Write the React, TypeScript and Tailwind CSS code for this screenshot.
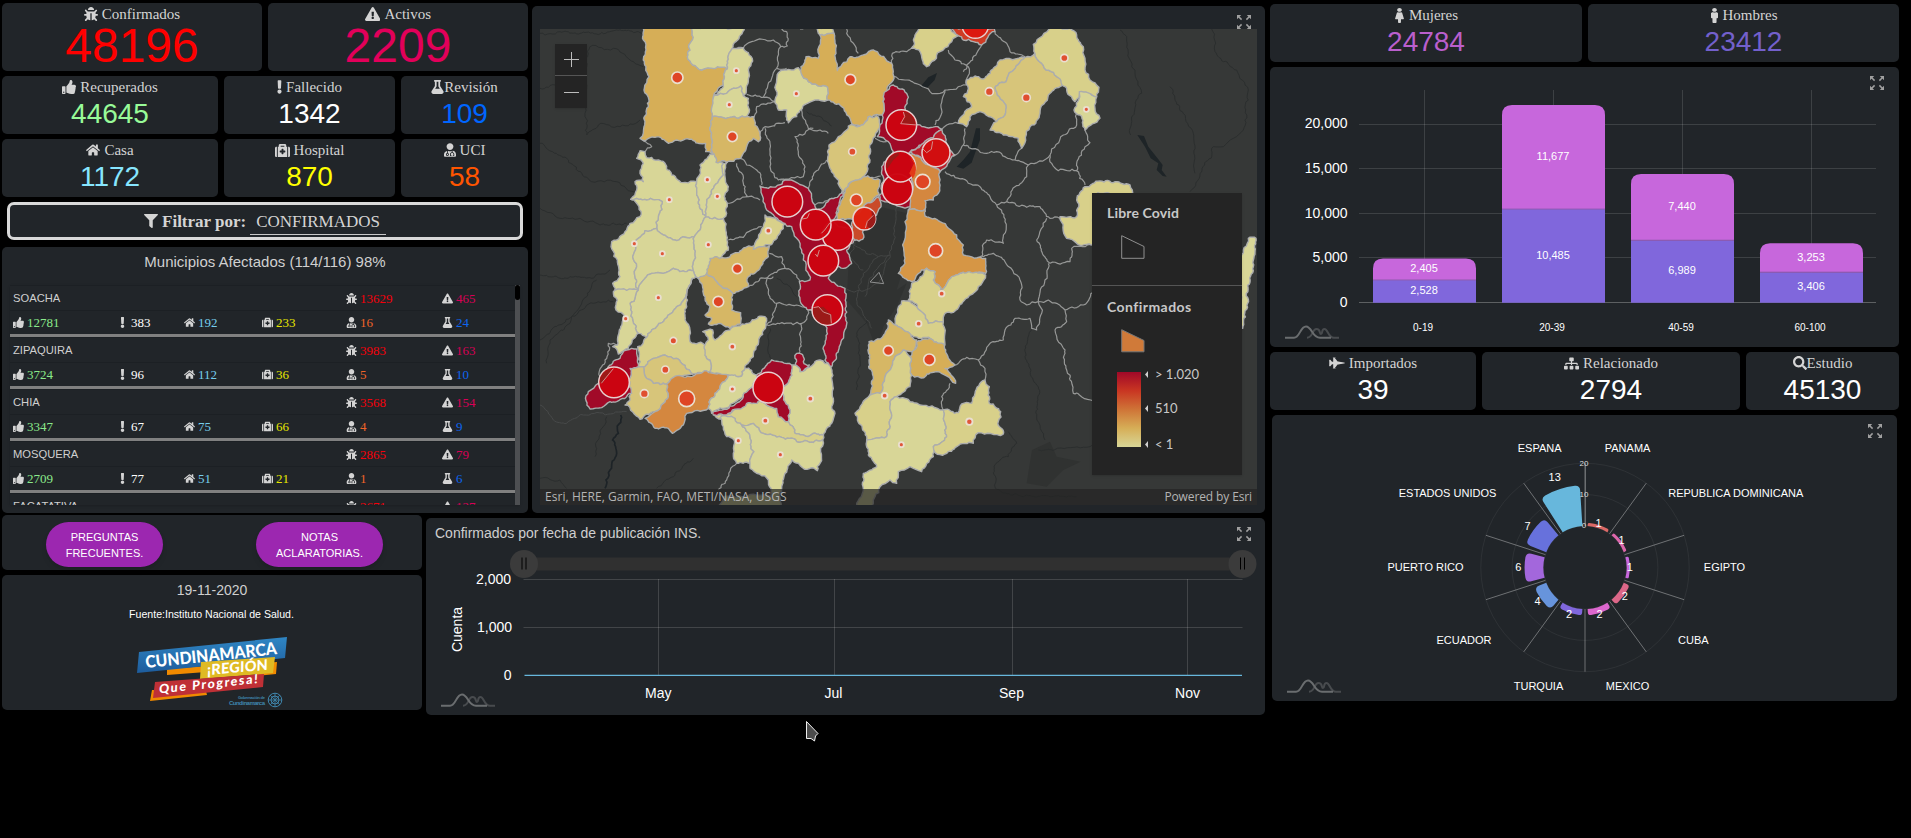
import type { ReactNode } from "react";
import type { IconType } from "react-icons";
import {
  FaBug,
  FaExclamationTriangle,
  FaThumbsUp,
  FaExclamation,
  FaFlask,
  FaHome,
  FaMedkit,
  FaUserMd,
  FaFilter,
  FaFemale,
  FaMale,
  FaFighterJet,
  FaSitemap,
  FaSearch,
} from "react-icons/fa";

const SANS = "font-['Liberation_Sans',sans-serif]";
const SERIF = "font-['Liberation_Serif',serif]";

/* ---------- shared pieces ---------- */

function Stat({
  icon: Icon,
  label,
  value,
  className,
  color,
  tight,
  big,
  iconClass = "size-[14px]",
}: {
  icon: IconType;
  label: string;
  value: string;
  className: string;
  color: string;
  tight?: boolean;
  big?: boolean;
  iconClass?: string;
}) {
  return (
    <div className={`flex flex-col items-center rounded-[5px] bg-[#212529] ${big ? "h-[68px]" : "h-[58px]"} ${className}`}>
      <div className={`flex h-[22px] items-center text-[15px] leading-none text-[#d4d4d4] ${SERIF} ${tight ? "gap-0" : "gap-1"}`}>
        <Icon className={iconClass} />
        <span>{label}</span>
      </div>
      <div className={`${SANS} ${color} ${big ? "text-[48px] leading-[41px]" : "text-[28px] leading-[31px]"}`}>{value}</div>
    </div>
  );
}

function ExpandIcon() {
  return (
    <svg width="14" height="14" viewBox="0 0 14 14" className="block" fill="#a0a0a0" stroke="#a0a0a0">
      <g strokeWidth="1.5">
        <path d="M1.5 1.5L4.6 4.6M12.5 1.5L9.4 4.6M1.5 12.5L4.6 9.4M12.5 12.5L9.4 9.4" />
      </g>
      <path stroke="none" d="M0 0h4.2L0 4.2zM14 0v4.2L9.8 0zM0 14V9.8L4.2 14zM14 14H9.8L14 9.8z" />
    </svg>
  );
}

function CurvesLogo({ x, y }: { x: number; y: number }) {
  return (
    <g transform={`translate(${x} ${y})`} fill="none" strokeWidth="2">
      <path stroke="#484b4e" d="M22 12.3C28 12.3 27 3.5 31.5 3.5S34 8.5 36 8.5S36 3.5 39.5 3.5S43 12.3 49 12.3H54" />
      <path stroke="#6a6d6f" d="M0 12.3H9C15 12.3 15 1 21 1S27 12.3 35 12.3H46" />
    </g>
  );
}

/* ---------- map ---------- */

type Pt = [number, number];

function parse(s: string, dx = 0, dy = 0): Pt[] {
  return s
    .trim()
    .split(/\s+/)
    .map((p) => {
      const [x, y] = p.split(",").map(Number);
      return [x + dx, y + dy] as Pt;
    });
}

function noise(a: number, b: number) {
  const v = Math.sin(a * 12.9898 + b * 78.233) * 43758.5453;
  return v - Math.floor(v) - 0.5;
}

/* Breaks a segment into small irregular steps; both directions give the same line. */
function subdivide(a: Pt, b: Pt): Pt[] {
  const flip = a[0] > b[0] || (a[0] === b[0] && a[1] > b[1]);
  const [p, q] = flip ? [b, a] : [a, b];
  const walk = (m: Pt, n: Pt): Pt[] => {
    const len = Math.hypot(n[0] - m[0], n[1] - m[1]);
    if (len < 10) return [n];
    const off = noise(m[0] + n[0], m[1] + n[1]) * Math.min(len * 0.42, 10);
    const c: Pt = [
      (m[0] + n[0]) / 2 - ((n[1] - m[1]) / len) * off,
      (m[1] + n[1]) / 2 + ((n[0] - m[0]) / len) * off,
    ];
    return [...walk(m, c), ...walk(c, n)];
  };
  const all = [p, ...walk(p, q)];
  if (flip) all.reverse();
  return all.slice(1);
}

function outline(pts: Pt[], closed: boolean) {
  const out: Pt[] = [pts[0]];
  const n = closed ? pts.length : pts.length - 1;
  for (let i = 0; i < n; i++) out.push(...subdivide(pts[i], pts[(i + 1) % pts.length]));
  return "M" + out.map((p) => `${p[0].toFixed(1)} ${p[1].toFixed(1)}`).join("L") + (closed ? "Z" : "");
}

const PALE = "#d8d697";
const SAND = "#d8d08a";
const WHEAT = "#d7c57a";
const GOLD = "#d6b765";
const AMBER = "#d6ae57";
const ORANGE = "#d4873f";
const CRIMSON = "#a10a28";

type Region = [string, string, number?, number?];

const regions: Region[] = [
  [AMBER, "340,80 487,80 480,130 472,170 488,195 515,210 592,207 580,255 553,280 547,350 550,462 527,455 527,430 490,422 440,420 415,430 375,412 345,423 330,415 342,380 357,300 343,265 357,230 343,190 348,150 340,120"],
  [PALE, "487,80 642,80 642,90 628,110 607,145 597,160 592,207 515,210 488,195 472,170 480,130"],
  [PALE, "607,145 640,143 655,158 668,183 655,210 655,245 640,288 632,258 618,265 590,280 553,285 580,255 592,207 597,160"],
  [PALE, "553,285 590,280 618,265 632,258 640,288 655,295 650,350 600,352 547,350"],
  [GOLD, "547,350 600,352 650,350 672,350 675,375 690,400 685,425 670,415 650,440 632,475 590,487 558,487 550,462"],
  [PALE, "345,455 350,473 405,490 425,525 465,547 500,545 500,570 505,610 528,650 500,700 493,710 440,722 400,705 380,685 385,650 397,605 350,600 302,598 320,570 315,545 340,545 330,520 340,490 320,475 330,452"],
  [PALE, "302,598 350,600 397,605 385,650 380,685 345,692 325,715 308,770 320,800 315,830 325,870 300,870 255,870 248,850 270,830 262,780 245,725 290,690 300,670 330,650 327,620"],
  [PALE, "325,715 345,692 380,685 400,705 440,722 493,710 495,760 490,812 470,815 430,805 400,820 365,820 345,835 325,870 315,830 320,800 308,770"],
  [PALE, "493,710 500,700 528,650 580,655 587,690 595,750 575,770 545,790 530,835 505,835 497,830 490,812 495,760"],
  [PALE, "510,495 540,462 553,462 558,487 580,490 580,525 545,570 530,610 528,650 505,610 500,570 500,545 510,510"],
  [PALE, "580,490 592,487 585,530 595,560 585,600 590,640 580,655 528,650 530,610 545,570 580,525"],
  [PALE, "345,85 365,70 400,70 430,55 470,65 490,62 497,80 487,85 470,130 440,170 380,230 350,262 325,250 308,210 300,160 325,120", 0, 750],
  [PALE, "255,120 325,120 300,160 308,210 325,250 300,285 265,312 248,290 262,285 268,240 285,200 258,180 262,150 250,125", 0, 750],
  [SAND, "487,85 470,130 465,210 480,240 480,275 530,285 530,325 540,330 540,365 500,370 488,372 455,340 440,325 405,315 370,325 340,350 325,350 323,290 350,262 380,230 440,170 470,130", 0, 750],
  [WHEAT, "340,350 370,325 405,315 440,325 455,340 488,372 440,385 418,395 410,402 370,400 350,385 342,360", 0, 750],
  [WHEAT, "300,355 325,350 340,350 342,360 350,385 370,400 410,402 415,440 400,460 375,485 330,508 285,465 300,450 298,410", 0, 750],
  [ORANGE, "418,395 430,382 480,380 530,362 595,375 570,410 540,450 535,475 470,490 460,525 427,550 415,535 375,535 345,505 375,485 400,460 415,440 410,402", 0, 750],
  [CRIMSON, "320,297 325,350 300,355 298,410 305,430 260,455 240,455 215,473 180,477 168,452 175,425 205,400 235,350 270,325 290,300", 0, 750],
  [GOLD, "540,25 560,20 600,20 635,0 665,-10 718,-12 715,20 690,55 655,80 655,110 630,122 608,130 590,115 555,90 530,70", 0, 750],
  [GOLD, "505,85 530,70 555,90 590,115 608,130 605,180 632,188 632,222 600,235 575,222 535,222 545,205 525,195 540,170 520,130", 0, 750],
  [SAND, "518,245 548,240 555,270 600,240 650,220 685,200 705,200 708,225 690,260 670,320 645,355 635,378 605,380 595,375 540,365 540,330 530,325 525,285 535,270", 0, 750],
  [PALE, "595,375 635,378 645,355 680,375 670,410 640,440 580,475 545,490 535,475 540,450 570,410", 0, 750],
  [PALE, "785,345 797,345 810,365 838,352 870,330 905,345 905,470 915,490 905,520 880,555 840,557 795,550 775,515 780,480 765,455 757,430 780,385", 0, 750],
  [SAND, "553,495 600,492 650,460 690,452 740,475 745,500 775,515 795,550 840,557 880,555 878,570 800,575 755,562 700,550 670,520 635,525 615,505 560,503", 0, 750],
  [PALE, "570,503 615,505 635,525 660,560 672,605 660,640 620,640 610,610 612,570 590,560 580,530", 0, 750],
  [PALE, "635,525 670,520 700,550 755,562 800,575 878,570 870,640 862,662 820,655 785,630 765,670 755,715 750,775 565,775 580,740 725,742 715,690 660,655 660,640 672,605 660,560", 0, 750],
  [CRIMSON, "710,345 725,330 785,345 780,385 757,430 765,455 780,480 775,515 745,500 740,475 690,452 650,460 595,490 550,495 550,485 600,468 640,440 670,410 680,375", 0, 750],
  [CRIMSON, "800,310 820,320 820,335 838,345 810,365 797,345 795,325", 0, 750],
  [PALE, "752,212 775,208 805,203 822,235 893,262 893,300 855,300 822,315 800,350 775,368 770,330 745,330 735,300 740,240"],
  [AMBER, "870,105 912,100 918,160 922,212 935,195 960,170 1000,165 1035,153 1085,190 1090,240 1060,290 1057,345 1015,350 990,378 965,370 935,320 893,300 893,262 822,235 812,212 828,170 865,175"],
  [SAND, "858,80 900,80 912,100 870,105"],
  [WHEAT, "990,378 1015,350 1038,347 1050,375 1035,410 1025,430 1020,480 1000,530 965,545 935,578 925,540 900,505 893,475 897,435 925,410 955,378"],
  [AMBER, "1000,530 1050,540 1048,585 1010,610 970,660 920,660 925,620 945,575 965,545"],
  [CRIMSON, "690,558 715,565 765,540 835,565 850,610 860,630 905,595 945,578 925,620 920,645 905,660 925,680 965,690 975,720 950,750 965,790 940,805 915,800 895,835 945,865 947,960 935,1020 905,1100 885,1080 890,990 880,945 835,930 810,900 808,845 840,840 820,780 815,750 800,715 785,680 760,670 710,630 700,595"],
  [SAND, "705,645 765,670 750,700 720,735 670,748 685,715 700,680"],
  ["#c94a2a", "970,660 1010,610 1045,590 1053,620 1030,650 1000,690 998,718 975,720 965,690"],
  [CRIMSON, "1090,255 1130,280 1130,375 1235,388 1180,430 1135,460 1145,510 1150,560 1140,620 1110,620 1050,600 1060,545 1055,500 1090,455 1075,425 1042,410 1050,375 1057,345 1060,290"],
  ["#b8202c", "1140,455 1180,430 1235,388 1250,430 1275,465 1230,515 1205,500 1175,480"],
  [ORANGE, "1135,460 1175,480 1205,500 1230,515 1225,580 1210,600 1185,602 1185,628 1135,630 1150,560 1145,510"],
  ["#d69645", "1135,630 1185,628 1185,648 1230,665 1280,705 1300,735 1300,765 1367,775 1367,820 1290,820 1265,830 1235,875 1210,840 1215,815 1190,805 1145,845 1105,820 1125,790 1125,665"],
  [SAND, "1165,80 1262,80 1262,87 1285,107 1230,155 1190,200 1170,155 1145,145 1155,105"],
  ["#cf3c25", "1262,80 1395,80 1395,95 1355,135 1330,125 1300,120 1285,107"],
  [WHEAT, "1310,240 1335,228 1355,237 1410,180 1485,172 1445,215 1430,240 1395,262 1408,290 1428,315 1425,345 1400,365 1350,335 1320,350 1310,380 1285,370 1325,320 1300,290 1315,265"],
  [WHEAT, "1485,172 1515,160 1535,190 1580,230 1620,245 1590,260 1555,285 1530,340 1500,380 1475,445 1465,415 1420,405 1380,390 1400,365 1425,345 1428,315 1408,290 1395,262 1430,240 1445,215"],
  [SAND, "1510,133 1560,80 1620,85 1640,105 1660,140 1665,210 1680,240 1707,262 1700,290 1650,275 1635,305 1610,265 1580,230 1535,190 1515,160"],
  [PALE, "1648,275 1700,290 1695,325 1710,355 1665,390 1650,345 1632,330"],
  [SAND, "1665,560 1710,543 1800,555 1804,585 1690,585 1690,735 1640,730 1610,715 1590,650 1640,650 1640,600"],
  [PALE, "2130,770 2155,715 2178,715 2170,800 2138,985"],
  [SAND, "110,55 135,65 130,90 155,125 185,80 210,70 287,75 250,130 190,187 165,190 160,215 115,220 100,190 75,160 55,150 65,100", 1080, 750],
  [SAND, "35,153 60,155 100,190 115,220 160,215 165,285 125,268 85,265 50,245 15,225", 1080, 750],
  [GOLD, "-5,210 15,225 50,245 80,270 75,305 40,300 15,320 5,350 -15,380 -30,430 -60,435 -50,380 -63,355 -63,275 -15,250", 1080, 750],
  [AMBER, "80,275 125,268 163,285 175,325 195,345 165,355 197,400 140,365 105,380 65,375 60,320", 1080, 750],
  [SAND, "-15,380 5,350 15,320 40,300 60,320 65,375 60,410 20,440 0,455 0,510 -10,560 -70,570 -105,490 -60,435 -30,430", 1080, 750],
  [PALE, "0,455 20,440 55,448 90,465 160,480 165,520 170,560 130,590 130,620 95,665 60,650 25,665 20,700 0,690 -30,710 -60,775 -105,775 -80,715 -80,670 -40,650 -65,615 -70,570 -10,560 0,510", 1080, 750],
  [SAND, "160,480 205,488 215,462 245,460 255,430 285,390 298,410 298,460 332,485 325,515 340,552 265,548 250,580 200,590 165,612 135,608 130,590 170,560 165,520", 1080, 750],
];

const borders: [string, number?, number?][] = [
  ["612,145 640,145 665,125 730,120 752,140 740,205 725,235 700,292 650,283"],
  ["752,140 772,138 770,95 755,87"],
  ["740,205 770,205"],
  ["700,292 735,305 680,320 672,350"],
  ["765,368 740,370 705,380 690,400"],
  ["705,385 720,430 720,500 745,540 765,540"],
  ["815,320 820,355 835,385 870,390 895,400"],
  ["850,385 795,410 805,455 825,500 820,530 750,540"],
  ["890,480 865,510 840,545 835,565"],
  ["950,87 950,100 985,160"],
  ["810,87 820,87"],
  ["630,475 650,495 680,510 695,555"],
  ["620,490 640,550 655,590 590,610"],
  ["655,590 690,600"],
  ["850,615 905,595"],
  ["595,720 640,712 665,690 695,680"],
  ["1035,415 1070,425"],
  ["1000,530 1052,528"],
  ["340,423 365,440 345,455"],
  ["1085,190 1087,160 1130,155 1150,140"],
  ["1090,228 1125,240 1170,255 1200,275 1230,280 1245,270 1310,255 1315,200 1275,180 1255,150"],
  ["1300,215 1310,195 1340,160 1355,135"],
  ["1395,95 1430,130 1440,155 1485,170"],
  ["1245,270 1235,330 1215,375"],
  ["1235,388 1250,375 1285,370"],
  ["1305,385 1300,435 1270,470"],
  ["1300,435 1370,460 1400,455 1455,480 1475,445"],
  ["1455,480 1495,495 1560,465 1600,405 1640,375 1640,340"],
  ["1560,465 1565,490 1585,512 1640,512 1640,490 1665,440 1680,428 1665,390"],
  ["1640,512 1665,555"],
  ["1495,495 1490,530 1455,560 1430,605"],
  ["1245,515 1350,560 1380,590 1400,615 1425,665 1420,730 1370,720 1355,770"],
  ["1400,615 1430,605 1490,622 1530,620 1560,655 1590,655"],
  ["1550,655 1520,720 1560,790 1620,785 1625,745 1690,735"],
  ["270,20 310,10 345,35 390,90 390,150 410,165 445,155 475,40", 1080, 750],
  ["445,155 475,150 525,180 530,215 495,240 525,310 530,360 550,430 620,455", 1080, 750],
  ["525,180 580,165 610,120", 1080, 750],
  ["445,155 455,190 440,240 425,235 420,205 375,205 345,240 340,270 300,280 265,330 230,322 195,345", 1080, 750],
  ["265,330 285,355 285,390", 1080, 750],
  ["180,400 155,440 160,480", 1080, 750],
  ["718,10 755,20 765,55 730,70 710,90 715,130 740,160 800,165 835,175", 0, 750],
  ["765,55 800,75 810,100", 0, 750],
  ["655,110 690,85 730,80", 0, 750],
  ["740,160 730,200 710,225 815,220 830,200 835,175", 0, 750],
  ["810,220 808,310", 0, 750],
  ["210,380 215,350 225,330 235,280 265,285", 0, 750],
  ["620,640 590,690 565,720", 0, 750],
];

const roads: [string, number?, number?][] = [
  ["30,100 90,95 170,97 260,90 340,100"],
  ["180,140 250,145 300,180 340,200"],
  ["180,140 170,200 165,350 170,405 205,375 270,380 330,360"],
  ["30,430 110,475 185,545 260,545 320,580"],
  ["30,625 90,655 150,655 210,675 290,670"],
  ["30,265 80,255"],
  ["30,75 110,85 195,80 240,60", 0, 750],
  ["30,270 100,220 190,160 250,155", 0, 750],
  ["50,340 60,270 120,220 200,90", 0, 750],
  ["195,620 230,500", 0, 750],
  ["380,715 430,680 490,625", 0, 750],
  ["30,685 90,690 110,715", 0, 750],
  ["690,90 710,110 715,160 735,210 755,280 725,350 722,405", 1080, 0],
  ["965,87 975,155 1040,210 1075,270 1060,390 1000,440 970,440 930,520 900,575", 1080, 0],
  ["840,260 880,340 910,400 915,520", 1080, 0],
  ["425,240 405,320 445,410 440,500 465,570", 1080, 750],
  ["355,545 380,580 355,620 318,640 316,715", 1080, 750],
  ["445,600 600,590 700,560", 1080, 750],
  ["316,715 400,740 560,740", 1080, 750],
  ["980,420 990,330 980,250 1010,210", 0, 750],
  ["830,335 870,350 905,378"],
  ["740,85 780,110 800,140", 0, 750],
  ["720,235 715,310 730,330", 0, 750],
];

const highways = [
  "1100,620 1080,765 1065,800 1040,850 1010,868 950,868",
  "965,730 1000,750 1045,770 1078,765",
  "1045,770 1000,820 985,860 985,920 1010,960 1025,985",
  "1080,765 1030,820 1005,890",
  "975,720 960,770 1000,810",
];

type Dot = [number, number, number, string];
const dots: Dot[] = [
  [619, 212, 9, "s"], [598, 314, 9, "s"], [799, 281, 9, "s"], [532, 539, 9, "s"], [562, 589, 9, "s"],
  [418, 599, 9, "s"], [313, 731, 9, "s"], [397, 761, 9, "s"], [535, 734, 9, "s"], [715, 692, 10, "s"],
  [385, 893, 9, "s"], [287, 956, 9, "s"], [607, 1040, 10, "s"], [607, 1167, 9, "s"], [841, 1196, 10, "s"],
  [706, 1262, 10, "s"], [625, 1322, 9, "s"], [751, 1364, 9, "s"], [1064, 1187, 10, "s"], [1114, 1334, 9, "s"],
  [1318, 1265, 11, "s"], [1235, 881, 10, "s"], [1166, 971, 10, "s"], [1669, 328, 9, "s"],
  [430, 1022, 12, "m"], [406, 1109, 13, "m"], [343, 1181, 14, "m"], [967, 455, 13, "m"],
  [1603, 174, 13, "m"], [1378, 275, 14, "m"], [1489, 293, 14, "m"],
  [442, 233, 19, "l"], [961, 239, 18, "l"], [607, 410, 17, "l"], [979, 600, 20, "l"], [622, 806, 17, "l"],
  [565, 905, 18, "l"], [1075, 1052, 17, "l"], [1198, 1079, 19, "l"], [1217, 752, 23, "l"], [1178, 545, 24, "l"], [470, 1196, 26, "l"],
];
const dotFill: Record<string, string> = { s: "#e0573a", m: "#e04f30", l: "#df4525" };

const bubbles: [number, number, number, string][] = [
  [1336, 75, 40, "#dc1810"], [1114, 375, 46, "#cc0411"], [1102, 568, 46, "#cc0411"], [1111, 500, 46, "#cc0411"],
  [1218, 458, 42, "#d20d10"], [1003, 656, 34, "#dc2010"], [772, 605, 46, "#cc0411"], [923, 705, 46, "#cc0411"],
  [857, 674, 46, "#cc0411"], [880, 782, 46, "#cc0411"], [892, 930, 46, "#cc0411"], [252, 1147, 46, "#cc0411"],
  [715, 1163, 46, "#cc0411"],
];

function MapDrawing() {
  return (
    <svg width="717" height="476" viewBox="30 87 2151 1428" className="block bg-[#363837]">
      <path d="M960 720L1050 620L1130 640L1125 790L1100 870L1130 850L1100 920L1060 980L1040 1050L1010 970L950 900Z" fill="#303231" />
      <path d="M1506 1350L1560 1325L1580 1370L1652 1385L1600 1410L1550 1460L1490 1450Z" fill="#303231" />
      {roads.map(([s, dx = 0, dy = 0], i) => (
        <path key={i} d={outline(parse(s, dx, dy), false)} fill="none" stroke="#2b2e2e" strokeWidth="3" />
      ))}
      {highways.map((s) => (
        <path key={s} d={outline(parse(s), false)} fill="none" stroke="#434544" strokeWidth="3" />
      ))}
      <path d={outline(parse("30,465 70,510 110,520 160,495 290,485", 0, 750), false)} fill="none" stroke="#474949" strokeWidth="3" />
      <path d={outline(parse("272,495 265,550 248,570 260,610 240,660 228,690 225,715", 0, 750), false)} fill="none" stroke="#1d2327" strokeWidth="5" />
      <g fill="#1e2427">
        <path d="M1170 262L1195 232L1221 219L1214 240L1190 265Z" />
        <path d="M1338 385L1350 385L1350 420L1335 460L1325 488L1300 506L1280 500L1300 480L1320 455Z" />
        <path d="M1822 405L1842 408L1855 440L1885 478L1898 495L1895 510L1910 530L1898 528L1880 510L1885 490L1862 475L1845 440Z" />
      </g>
      <g fill="none" stroke="#979897" strokeWidth="3.6" strokeLinejoin="round">
        {borders.map(([s, dx = 0, dy = 0], i) => (
          <path key={i} d={outline(parse(s, dx, dy), false)} />
        ))}
      </g>
      <g stroke="#acadad" strokeWidth="4.2" strokeLinejoin="round">
        {regions.map(([fill, s, dx = 0, dy = 0], i) => (
          <path key={i} fill={fill} d={outline(parse(s, dx, dy), true)} />
        ))}
      </g>
      {dots.map(([x, y, r, k], i) => (
        <circle key={i} cx={x} cy={y} r={k === "s" ? r - 1.5 : r - 2} fill={dotFill[k]} stroke="#eadfd0" strokeWidth={k === "s" ? 5.5 : 5} />
      ))}
      {bubbles.map(([x, y, r, f], i) => (
        <circle key={i} cx={x} cy={y} r={r} fill={f} fillOpacity="0.97" stroke="#e6cfce" strokeWidth="4.5" />
      ))}
      <g fill="#9b1a18">
        <path d="M1122 334A42 42 0 0 1 1156 372L1116 370L1126 350Z" />
        <path d="M1069 500A42 42 0 0 1 1107 458L1106 466L1090 480L1072 506Z" />
        <path d="M1024 631A32 32 0 0 1 1020 685L1012 680L1012 665L1026 650Z" />
        <path d="M850 923L880 920L905 945L902 972A42 42 0 0 1 850 923Z" />
        <path d="M209 1145Q212 1112 246 1106L216 1150Z" />
      </g>
      <g fill="none" stroke="#d08f8c" strokeWidth="3">
        <path d="M1160 375L1112 371L1124 350L1120 336M850 923L866 920L880 936L902 944L904 970M214 1150L250 1106M1006 684L1012 664L1030 646M1178 446L1190 458L1204 448L1208 424M874 700L884 690L900 668M856 762L862 770L868 750M812 658L832 654L838 640" />
      </g>
      <path d="M1140 470L1152 490L1138 520L1148 535A46 46 0 0 0 1140 470Z" fill="#e33a18" />
      <path d="M1047 817L1020 846L1061 851Z" fill="none" stroke="#8f9090" strokeWidth="3" />
    </svg>
  );
}

function LegendTick({ children }: { children: ReactNode }) {
  return (
    <div className="flex h-4 items-center gap-[7px]">
      <svg width="3" height="7" viewBox="0 0 3 7"><path d="M3 0v7L0 3.5z" fill="#d0d0d0" /></svg>
      <span>{children}</span>
    </div>
  );
}

function MapCard() {
  return (
    <div className="mt-[3px] flex h-[507px] w-[733px] flex-col rounded-[5px] bg-[#212529]">
      <div className="flex h-[23px] justify-end pt-[9px] pr-[14px]">
        <ExpandIcon />
      </div>
      <div className="relative ml-2 h-[476px] w-[717px] overflow-hidden font-[Lato,sans-serif] text-[#c8c8c8]">
        <MapDrawing />
        <div className="absolute top-[15px] left-[15px] flex w-8 flex-col bg-[#242424] shadow">
          <div className="flex h-8 items-center justify-center border-b border-[#555]">
            <svg width="15" height="15" viewBox="0 0 15 15"><path d="M7.5 0v15M0 7.5h15" stroke="#bdbdbd" strokeWidth="1" /></svg>
          </div>
          <div className="flex h-8 items-center justify-center">
            <svg width="15" height="15" viewBox="0 0 15 15"><path d="M0 7.5h15" stroke="#bdbdbd" strokeWidth="1" /></svg>
          </div>
        </div>
        <div className="absolute top-[164px] left-[552px] flex h-[282px] w-[150px] flex-col bg-[#242424] shadow">
          <div className="h-[93px] border-b border-[#555] pt-3 pl-[15px]">
            <div className="text-[14px] leading-4 font-bold tracking-[0.15px]">Libre Covid</div>
            <svg width="24" height="24" viewBox="0 0 24 24" className="mt-[14px] ml-[14px] block">
              <path d="M.7.7L23 11.5V23.3H.7z" fill="none" stroke="#8f8f8f" />
            </svg>
          </div>
          <div className="pt-[13px] pl-[15px]">
            <div className="text-[14px] leading-4 font-bold tracking-[0.45px]">Confirmados</div>
            <svg width="24" height="24" viewBox="0 0 24 24" className="mt-[14px] ml-[14px] block">
              <path d="M.7.7L23 11.5V22.8H.7z" fill="#d07a39" stroke="#777" />
            </svg>
            <div className="mt-[19px] ml-[10px] flex gap-1">
              <div className="h-[75px] w-6 bg-[linear-gradient(#a00828,#c93622_25%,#cf7437_50%,#d6ae57_75%,#d8d697)]" />
              <div className="mt-[-6px] flex h-[86px] flex-col text-[13px] leading-4">
                <LegendTick>&gt; 1.020</LegendTick>
                <div className="mt-[18px]"><LegendTick>510</LegendTick></div>
                <div className="mt-[20px]"><LegendTick>&lt; 1</LegendTick></div>
              </div>
            </div>
          </div>
        </div>
        <div className="absolute inset-x-0 bottom-0 flex h-4 items-center justify-between bg-[#242424]/70 px-[5px] font-['Open_Sans',sans-serif] text-[12px] leading-4 text-[#b4b4b4]">
          <span className="tracking-[0.06px]">Esri, HERE, Garmin, FAO, METI/NASA, USGS</span>
          <span className="tracking-[-0.12px]">Powered by Esri</span>
        </div>
      </div>
    </div>
  );
}

/* ---------- municipality list ---------- */

const towns: [string, string, string, string, string, string, string, string, string][] = [
  ["SOACHA", "13629", "465", "12781", "383", "192", "233", "16", "24"],
  ["ZIPAQUIRA", "3983", "163", "3724", "96", "112", "36", "5", "10"],
  ["CHIA", "3568", "154", "3347", "67", "75", "66", "4", "9"],
  ["MOSQUERA", "2865", "79", "2709", "77", "51", "21", "1", "6"],
  ["FACATATIVA", "2671", "127", "2504", "63", "88", "30", "3", "8"],
];

function Cell({ icon: Icon, value, color }: { icon: IconType; value: string; color: string }) {
  return (
    <div className="flex items-center gap-[3px]">
      <Icon className="h-[11px] w-auto shrink-0 text-[#d4d4d4]" />
      <span className={color}>{value}</span>
    </div>
  );
}

function TownList() {
  return (
    <div className="mt-[7px] flex h-[266px] w-[526px] flex-col rounded-[5px] bg-[#212529]">
      <div className={`mt-[7px] text-center text-[15px] leading-4 text-[#d0d0d0] ${SANS}`}>Municipios Afectados (114/116) 98%</div>
      <div className={`mt-[15px] ml-2 flex h-[220px] w-[510px] overflow-hidden text-[13px] leading-none shadow ${SERIF}`}>
        <div className="w-[505px] shrink-0">
          {towns.map((t) => (
            <div key={t[0]} className="h-[52px] border-b-3 border-[#808080]">
              <div className="grid h-[25px] grid-cols-[333px_96px_1fr] items-center border-t border-[#1c2024] pl-[3px]">
                <span className={`pt-px text-[11.2px] text-[#d0d0d0] ${SANS}`}>{t[0]}</span>
                <Cell icon={FaBug} value={t[1]} color="text-[#f5000a]" />
                <Cell icon={FaExclamationTriangle} value={t[2]} color="text-[#d80056]" />
              </div>
              <div className="grid h-6 grid-cols-[104px_67px_78px_84px_96px_1fr] items-center border-t border-[#1c2024] pl-[3px]">
                <Cell icon={FaThumbsUp} value={t[3]} color="text-[#8be98b]" />
                <Cell icon={FaExclamation} value={t[4]} color="text-white" />
                <Cell icon={FaHome} value={t[5]} color="text-[#76cdec]" />
                <Cell icon={FaMedkit} value={t[6]} color="text-[#e6e600]" />
                <Cell icon={FaUserMd} value={t[7]} color="text-[#f06428]" />
                <Cell icon={FaFlask} value={t[8]} color="text-[#0d66f0]" />
              </div>
            </div>
          ))}
        </div>
        <div className="w-[5px] bg-[#4d4f52]">
          <div className="h-[15px] rounded-sm bg-black" />
        </div>
      </div>
    </div>
  );
}

/* ---------- charts ---------- */

function TimelineChart() {
  return (
    <div className="mt-[3px] flex h-[197px] w-[839px] flex-col rounded-[5px] bg-[#212529]">
      <div className="flex h-[28px] justify-between pr-[14px] pl-[9px]">
        <div className={`pt-[7px] text-[14px] leading-4 text-[#cfcfcf] ${SANS}`}>Confirmados por fecha de publicación INS.</div>
        <div className="pt-[9px]"><ExpandIcon /></div>
      </div>
      <svg width="839" height="169" viewBox="426 546 839 169" className={`block text-[14px] ${SANS}`} fill="#fff">
        <g stroke="#fff" strokeOpacity=".15">
          <path d="M523.5 579.5H1242.5M523.5 627.5H1242.5M658.5 579V675M834.5 579V675M1012.5 579V675M1187.5 579V675" />
        </g>
        <path d="M524.5 675.3H1242" stroke="#67b7dc" strokeWidth="1.2" />
        <rect x="524" y="557.5" width="718" height="13" fill="#303030" />
        {[524, 1242.5].map((x) => (
          <g key={x}>
            <circle cx={x} cy="564" r="14" fill="#3b3b3b" />
            <path d={`M${x - 2} 557.5v12M${x + 2} 557.5v12`} stroke="#000" fill="none" />
          </g>
        ))}
        <g textAnchor="end">
          <text x="511" y="584">2,000</text>
          <text x="512" y="632">1,000</text>
          <text x="511.5" y="680">0</text>
        </g>
        <g textAnchor="middle">
          <text x="658.3" y="698">May</text>
          <text x="833.5" y="698">Jul</text>
          <text x="1011.5" y="698">Sep</text>
          <text x="1187.5" y="698">Nov</text>
          <text transform="translate(462 629.5) rotate(-90)">Cuenta</text>
        </g>
        <CurvesLogo x={441} y={693.5} />
      </svg>
    </div>
  );
}

const ages = [
  { label: "0-19", x: 1373, women: 2405, men: 2528 },
  { label: "20-39", x: 1502, women: 11677, men: 10485 },
  { label: "40-59", x: 1631, women: 7440, men: 6989 },
  { label: "60-100", x: 1760, women: 3253, men: 3406 },
];

function AgeChart() {
  const k = 44.55 / 5000;
  return (
    <div className="mt-[5px] h-[280px] w-[629px] rounded-[5px] bg-[#212529]">
      <div className="flex h-[23px] justify-end pt-[9px] pr-[15px]"><ExpandIcon /></div>
      <svg width="629" height="257" viewBox="1270 90 629 257" className={`block ${SANS}`} fill="#fff">
        <path d="M1359 124.5H1876M1359 168.5H1876M1359 213.5H1876M1359 257.5H1876M1424.5 90V302M1553.5 90V302M1682.5 90V302M1811.5 90V302" stroke="#fff" strokeOpacity=".13" />
        <path d="M1359 302.5H1876" stroke="#fff" strokeOpacity=".27" />
        {ages.map((a) => {
          const mid = 302.5 - a.men * k;
          const top = mid - a.women * k;
          const cx = a.x + 51;
          return (
            <g key={a.label}>
              <path d={`M${a.x} 302.8V${mid}h103V302.8z`} fill="#8067dc" />
              <path d={`M${a.x} ${mid}V${top + 10}q0 -10 10 -10h83q10 0 10 10V${mid}z`} fill="#c767dc" />
              <path d={`M${a.x} ${mid}h103`} stroke="#905bb0" />
              <g textAnchor="middle" fontSize="11">
                <text x={cx} y={(top + mid) / 2 + 3}>{a.women.toLocaleString("en-US")}</text>
                <text x={cx} y={(302.5 + mid) / 2 + 3}>{a.men.toLocaleString("en-US")}</text>
                <text x={cx - 1} y="330.5" fontSize="10">{a.label}</text>
              </g>
            </g>
          );
        })}
        <g textAnchor="end" fontSize="14">
          <text x="1347.5" y="128.3">20,000</text>
          <text x="1347.5" y="173">15,000</text>
          <text x="1347.5" y="217.5">10,000</text>
          <text x="1347.5" y="262">5,000</text>
          <text x="1347.5" y="307">0</text>
        </g>
        <CurvesLogo x={1285} y={325.5} />
      </svg>
    </div>
  );
}

const CX = 1585;
const CY = 567.5;
const R0 = 41.7;

function polar(r: number, deg: number): Pt {
  const a = ((deg - 90) * Math.PI) / 180;
  return [CX + r * Math.cos(a), CY + r * Math.sin(a)];
}

/* Ring sector with rounded outer corners. */
function sector(a0: number, a1: number, value: number) {
  const r1 = R0 + 3.125 * value;
  const c = Math.min(5, (r1 - R0) / 2);
  const da = ((c / r1) * 180) / Math.PI;
  const p = (q: Pt) => `${q[0].toFixed(2)} ${q[1].toFixed(2)}`;
  return `M${p(polar(R0, a0))}L${p(polar(r1 - c, a0))}Q${p(polar(r1, a0))} ${p(polar(r1, a0 + da))}A${r1} ${r1} 0 0 1 ${p(polar(r1, a1 - da))}Q${p(polar(r1, a1))} ${p(polar(r1 - c, a1))}L${p(polar(R0, a1))}A${R0} ${R0} 0 0 0 ${p(polar(R0, a0))}Z`;
}

const countries: { name: string; v: number; color: string; lx: number; ly: number; vx: number; vy: number }[] = [
  { name: "PANAMA", v: 1, color: "#dc6967", lx: 1627.6, ly: 448, vx: 1598.5, vy: 523 },
  { name: "REPUBLICA DOMINICANA", v: 1, color: "#dc67ab", lx: 1735.8, ly: 493, vx: 1621.5, vy: 540 },
  { name: "EGIPTO", v: 1, color: "#c767dc", lx: 1724.5, ly: 567, vx: 1629.8, vy: 567 },
  { name: "CUBA", v: 2, color: "#dc6788", lx: 1693.3, ly: 640, vx: 1624.8, vy: 596 },
  { name: "MEXICO", v: 2, color: "#dc67ce", lx: 1627.5, ly: 686, vx: 1599.5, vy: 614 },
  { name: "TURQUIA", v: 2, color: "#8067dc", lx: 1538.5, ly: 686, vx: 1569, vy: 614 },
  { name: "ECUADOR", v: 4, color: "#6794dc", lx: 1464, ly: 640, vx: 1537.5, vy: 601 },
  { name: "PUERTO RICO", v: 6, color: "#a367dc", lx: 1425.5, ly: 567, vx: 1518.3, vy: 567 },
  { name: "ESTADOS UNIDOS", v: 7, color: "#6771dc", lx: 1447.5, ly: 493, vx: 1527.5, vy: 526 },
  { name: "ESPANA", v: 13, color: "#67b7dc", lx: 1539.7, ly: 448, vx: 1554.7, vy: 477 },
];

function ImportedChart() {
  return (
    <div className="mt-[5px] ml-[2px] h-[286px] w-[625px] rounded-[5px] bg-[#212529]">
      <div className="flex h-[23px] justify-end pt-[9px] pr-[15px]"><ExpandIcon /></div>
      <svg width="625" height="263" viewBox="1272 438 625 263" className={`block ${SANS}`} fill="#fff">
        <g fill="none" stroke="#fff" strokeOpacity=".06">
          <circle cx={CX} cy={CY} r={R0} />
          <circle cx={CX} cy={CY} r="72.9" />
          <circle cx={CX} cy={CY} r="104.2" />
        </g>
        {countries.map((c, i) => {
          const [x0, y0] = polar(R0, i * 36);
          const [x1, y1] = polar(104.2, i * 36);
          return <path key={c.name} d={`M${x0} ${y0}L${x1} ${y1}`} stroke="#fff" strokeOpacity=".35" />;
        })}
        <path d="M1585.5 463.5V526" stroke="#fff" strokeOpacity=".2" />
        {countries.map((c, i) => (
          <path key={c.name} d={sector(i * 36 + 3.6, i * 36 + 32.4, c.v)} fill={c.color} />
        ))}
        <g textAnchor="middle" fontSize="11">
          {countries.map((c) => (
            <g key={c.name}>
              <text x={c.lx} y={c.ly + 4}>{c.name}</text>
              <text x={c.vx} y={c.vy + 4}>{c.v}</text>
            </g>
          ))}
        </g>
        <g textAnchor="middle" fontSize="8" fill="#ddd">
          <text x="1584" y="466.3">20</text>
          <text x="1584" y="497.3">10</text>
          <text x="1584" y="528.3">0</text>
        </g>
        <CurvesLogo x={1287} y={679.5} />
      </svg>
    </div>
  );
}

/* ---------- brand ---------- */

function RegionLogo() {
  return (
    <svg width="152" height="72" viewBox="0 0 152 72" className="block">
      <defs>
        <linearGradient id="blue" x1="0" y1="0" x2="0" y2="1">
          <stop offset="0" stopColor="#2f86c4" />
          <stop offset="1" stopColor="#1d5c9c" />
        </linearGradient>
      </defs>
      <path d="M31 33L70 30V36L31 39Z" fill="#f08a00" />
      <path d="M128 27L141 26L140 38L120 40Z" fill="#f08a00" />
      <path d="M16 54L70 55L71 59L14 65Z" fill="#f08a00" />
      <path d="M3 16L151 1L149 22L1 37Z" fill="url(#blue)" />
      <path d="M65 26L139 21L137 37L64 43Z" fill="#dfba24" />
      <path d="M19 46L128 38L127 51L17 62Z" fill="#bf3036" />
      <g fill="#fff" fontFamily="Lato, sans-serif" fontWeight="900">
        <text transform="translate(10 32) rotate(-6)" fontSize="17" textLength="132" lengthAdjust="spacingAndGlyphs">CUNDINAMARCA</text>
        <text transform="translate(71 39) rotate(-5) skewX(-6)" fontSize="14.5" textLength="61" lengthAdjust="spacing">¡REGIÓN</text>
        <text transform="translate(23 57.5) rotate(-6) skewX(-8)" fontSize="12.5" textLength="99" lengthAdjust="spacing">Que Progresa!</text>
      </g>
      <g fill="#3f86ad" fontFamily="Liberation Sans, sans-serif" fontWeight="700">
        <text x="102" y="63" fontSize="4" textLength="27">Gobernación de</text>
        <text x="93" y="68.5" fontSize="6" textLength="36">Cundinamarca</text>
      </g>
      <g fill="none" stroke="#3f86ad">
        <circle cx="139" cy="64" r="6.8" />
        <circle cx="139" cy="64" r="4" />
        <path d="M139 57v14M132 64h14M134 59l10 10M144 59l-10 10" strokeWidth=".8" />
      </g>
    </svg>
  );
}

/* ---------- page ---------- */

export default function App() {
  return (
    <div className="relative flex h-[838px] w-[1911px] overflow-hidden bg-black">
      <div className="w-[1265px] shrink-0 pt-[3px] pl-[2px]">
        <div className="flex gap-1">
          <div className="w-[526px]">
            <div className="flex gap-[6px]">
              <Stat big icon={FaBug} label="Confirmados" value="48196" color="text-[#ff0000]" className="w-[260px]" />
              <Stat big icon={FaExclamationTriangle} iconClass="h-[14px] w-[15.5px]" label="Activos" value="2209" color="text-[#e2005a]" className="w-[260px]" />
            </div>
            <div className="mt-[5px] flex gap-[6px]">
              <Stat icon={FaThumbsUp} label="Recuperados" value="44645" color="text-[#98fb98]" className="w-[216px]" />
              <Stat icon={FaExclamation} iconClass="h-[14px] w-[5px]" label="Fallecido" value="1342" color="text-white" className="w-[171px]" />
              <Stat tight icon={FaFlask} iconClass="h-[14px] w-[13px]" label="Revisión" value="109" color="text-[#0066ff]" className="w-[127px]" />
            </div>
            <div className="mt-[5px] flex gap-[6px]">
              <Stat icon={FaHome} label="Casa" value="1172" color="text-[#87e6ff]" className="w-[216px]" />
              <Stat icon={FaMedkit} iconClass="size-[15px]" label="Hospital" value="870" color="text-[#ffff00]" className="w-[171px]" />
              <Stat icon={FaUserMd} iconClass="h-[14px] w-[12px]" label="UCI" value="58" color="text-[#ff5500]" className="w-[127px]" />
            </div>
            <div className={`mt-[5px] ml-[5px] flex h-[38px] w-[516px] items-center justify-center gap-1 rounded-[7px] border-3 border-[#d9d9d9] bg-[#212529] text-[17px] leading-none text-[#d4d4d4] ${SERIF}`}>
              <FaFilter className="size-[14px]" />
              <span className="font-bold">Filtrar por:</span>
              <span className="mt-[5px] border-b border-[#c8c8c8] pr-[6px] pb-[4px] pl-[6px]">CONFIRMADOS</span>
            </div>
            <TownList />
          </div>
          <MapCard />
        </div>
        <div className="mt-[2px] flex gap-1">
          <div className="w-[420px] shrink-0">
            <div className={`flex h-[55px] rounded-[5px] bg-[#212529] pt-[7px] text-center text-[11px] leading-[16px] text-white ${SANS}`}>
              <div className="ml-[44px] flex h-[45px] w-[117px] items-center justify-center rounded-full bg-[#9c27b0] shadow-md">
                <span>PREGUNTAS<br />FRECUENTES.</span>
              </div>
              <div className="ml-[93px] flex h-[45px] w-[127px] items-center justify-center rounded-full bg-[#9c27b0] shadow-md">
                <span>NOTAS<br />ACLARATORIAS.</span>
              </div>
            </div>
            <div className={`mt-[5px] flex h-[135px] flex-col items-center rounded-[5px] bg-[#212529] ${SANS}`}>
              <div className="mt-[7px] text-[14px] leading-4 text-[#cfcfcf]">19-11-2020</div>
              <div className="mt-[10px] pr-[1px] text-[10.6px] leading-[13px] text-white">Fuente:Instituto Nacional de Salud.</div>
              <div className="mt-[15px]"><RegionLogo /></div>
            </div>
          </div>
          <TimelineChart />
        </div>
      </div>

      <div className="ml-[5px] w-[629px] shrink-0 pt-1">
        <div className="flex gap-[6px]">
          <Stat icon={FaFemale} iconClass="h-[15px] w-[11px] scale-x-125" label="Mujeres" value="24784" color="text-[#ba5fcd]" className="w-[312px]" />
          <Stat icon={FaMale} iconClass="h-[15px] w-[9px] scale-x-125" label="Hombres" value="23412" color="text-[#7360cc]" className="w-[311px]" />
        </div>
        <AgeChart />
        <div className="mt-[5px] flex gap-[6px]">
          <Stat icon={FaFighterJet} iconClass="h-[14px] w-[16px]" label="Importados" value="39" color="text-white" className="w-[206px]" />
          <Stat icon={FaSitemap} iconClass="h-[13px] w-[15px]" label="Relacionado" value="2794" color="text-white" className="w-[258px]" />
          <Stat tight icon={FaSearch} label="Estudio" value="45130" color="text-white" className="w-[153px]" />
        </div>
        <ImportedChart />
      </div>

      <svg width="14" height="22" viewBox="0 0 14 22" className="absolute top-[720px] left-[805px]">
        <path d="M1.5 1.5V18.5H6L9.5 21L10.5 16L13 13.5Z" fill="#4b4b4b" stroke="#eee" />
      </svg>
    </div>
  );
}
